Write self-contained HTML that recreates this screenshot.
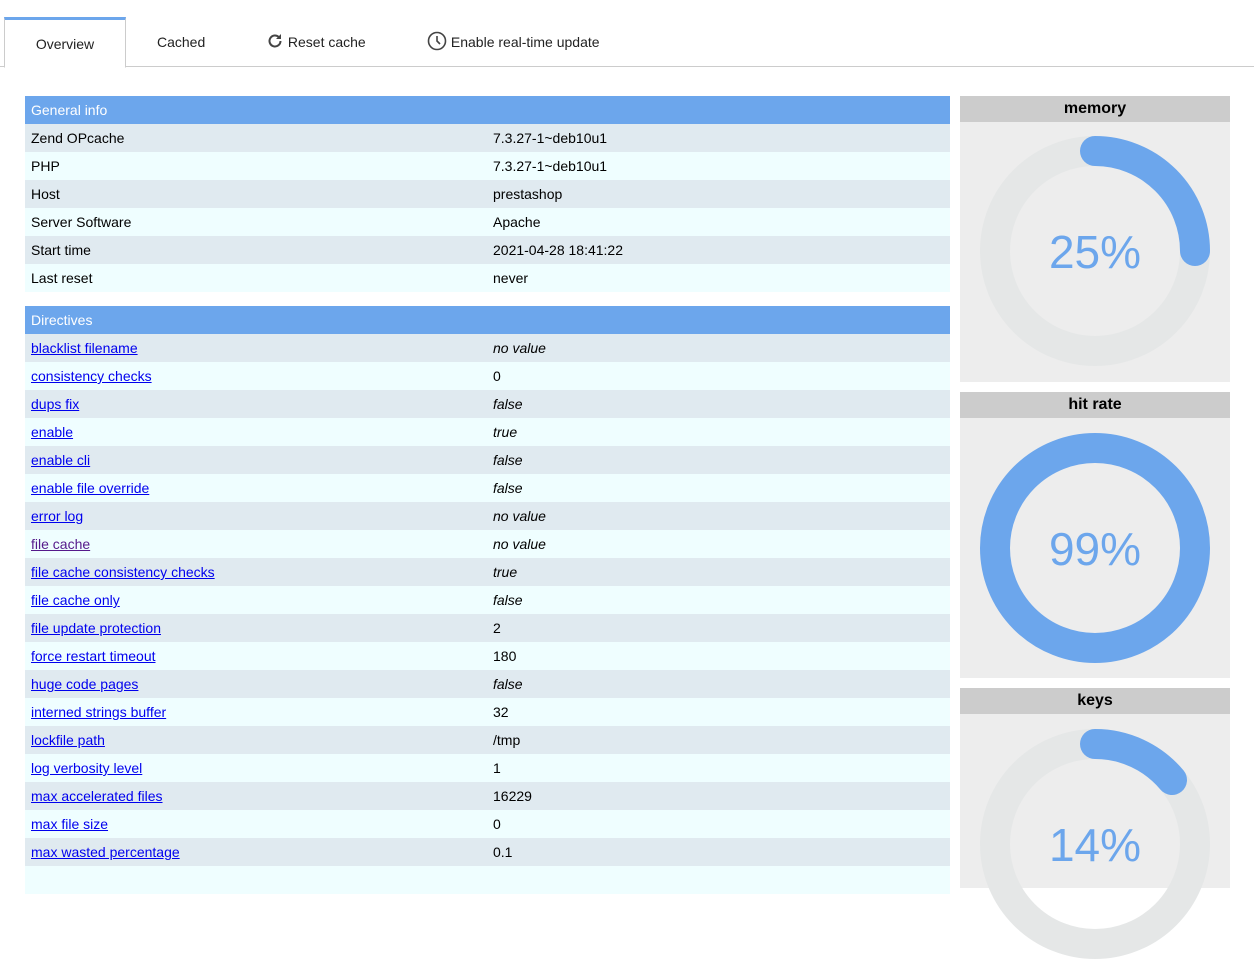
<!DOCTYPE html>
<html><head><style>
body{margin:0;background:#fff;font-family:"Liberation Sans",Arial,sans-serif;font-size:14px;color:#000;width:1254px;height:872px;overflow:hidden;position:relative}
.tabs{position:absolute;left:0;top:0;width:1254px;height:67px;border-bottom:1px solid #ccc;box-sizing:border-box}
.tab{position:absolute;top:17px;height:50px;line-height:50px;font-size:14px;color:#222}
.tab.active{left:4px;width:122px;box-sizing:border-box;border:1px solid #ccc;border-top:3px solid #6ca6ec;border-bottom:1px solid #fff;background:#fff;text-align:center;line-height:48px;height:51px}
table{position:absolute;left:25px;width:925px;border-collapse:collapse}
td{height:28px;padding:0 6px;font-size:14px}
th{height:28px;background:#6ca6ec;color:#fff;text-align:left;font-weight:normal;padding:0 6px}
tr:nth-child(odd) td{background:#eff;background:#effeff}
tr:nth-child(even) td{background:#e0eaf0}
td:first-child{width:450px}
a{color:#00e;text-decoration:underline}
i{font-style:italic}
.panel{position:absolute;left:960px;width:270px;background:#ededed}
.panel .h{height:26px;line-height:26px;background:#ccc;text-align:center;font-weight:bold;font-size:16px}
</style></head><body>
<div class="tabs">
<div class="tab active">Overview</div>
<div class="tab" style="left:157px">Cached</div>
<div class="tab" style="left:266px"><svg width="18" height="18" viewBox="0 0 18 18" style="vertical-align:-3px"><path d="M14.5 9a5.5 5.5 0 1 1-1.6-3.9" fill="none" stroke="#444" stroke-width="2"/><path d="M15 2v5h-5z" fill="#444"/></svg> Reset cache</div>
<div class="tab" style="left:427px"><svg width="20" height="20" viewBox="0 0 20 20" style="vertical-align:-4px"><circle cx="10" cy="10" r="8.5" fill="none" stroke="#444" stroke-width="1.6"/><path d="M10 5v5l3 3" fill="none" stroke="#444" stroke-width="1.6"/></svg> Enable real-time update</div>
</div>
<table style="top:96px"><tr><th colspan="2">General info</th></tr>
<tr><td>Zend OPcache</td><td>7.3.27-1~deb10u1</td></tr>
<tr><td>PHP</td><td>7.3.27-1~deb10u1</td></tr>
<tr><td>Host</td><td>prestashop</td></tr>
<tr><td>Server Software</td><td>Apache</td></tr>
<tr><td>Start time</td><td>2021-04-28 18:41:22</td></tr>
<tr><td>Last reset</td><td>never</td></tr>
</table>
<table style="top:306px"><tr><th colspan="2">Directives</th></tr>
<tr><td><a>blacklist filename</a></td><td><i>no value</i></td></tr>
<tr><td><a>consistency checks</a></td><td>0</td></tr>
<tr><td><a>dups fix</a></td><td><i>false</i></td></tr>
<tr><td><a>enable</a></td><td><i>true</i></td></tr>
<tr><td><a>enable cli</a></td><td><i>false</i></td></tr>
<tr><td><a>enable file override</a></td><td><i>false</i></td></tr>
<tr><td><a>error log</a></td><td><i>no value</i></td></tr>
<tr><td><a style="color:#551a8b">file cache</a></td><td><i>no value</i></td></tr>
<tr><td><a>file cache consistency checks</a></td><td><i>true</i></td></tr>
<tr><td><a>file cache only</a></td><td><i>false</i></td></tr>
<tr><td><a>file update protection</a></td><td>2</td></tr>
<tr><td><a>force restart timeout</a></td><td>180</td></tr>
<tr><td><a>huge code pages</a></td><td><i>false</i></td></tr>
<tr><td><a>interned strings buffer</a></td><td>32</td></tr>
<tr><td><a>lockfile path</a></td><td>/tmp</td></tr>
<tr><td><a>log verbosity level</a></td><td>1</td></tr>
<tr><td><a>max accelerated files</a></td><td>16229</td></tr>
<tr><td><a>max file size</a></td><td>0</td></tr>
<tr><td><a>max wasted percentage</a></td><td>0.1</td></tr>
<tr><td>&nbsp;</td><td></td></tr>
</table>
<div class="panel" style="top:96px;height:286px"><div class="h">memory</div>
<svg width="270" height="260" style="display:block"><circle cx="135" cy="129" r="100" fill="none" stroke="#e5e7e7" stroke-width="30"/><path d="M135 29A100 100 0 0 1 235 129" fill="none" stroke="#6ca6ec" stroke-width="30" stroke-linecap="round"/><text x="135" y="146" text-anchor="middle" font-size="46" fill="#6ca6ec" font-family="Liberation Sans,sans-serif">25%</text></svg></div>
<div class="panel" style="top:392px;height:286px"><div class="h">hit rate</div>
<svg width="270" height="260" style="display:block"><circle cx="135" cy="130" r="100" fill="none" stroke="#6ca6ec" stroke-width="30"/><text x="135" y="147" text-anchor="middle" font-size="46" fill="#6ca6ec" font-family="Liberation Sans,sans-serif">99%</text></svg></div>
<div class="panel" style="top:688px;height:200px"><div class="h">keys</div>
<svg width="270" height="260" style="display:block"><circle cx="135" cy="130" r="100" fill="none" stroke="#e5e7e7" stroke-width="30"/><path d="M135 30A100 100 0 0 1 212 66" fill="none" stroke="#6ca6ec" stroke-width="30" stroke-linecap="round"/><text x="135" y="147" text-anchor="middle" font-size="46" fill="#6ca6ec" font-family="Liberation Sans,sans-serif">14%</text></svg></div>
</body></html>
